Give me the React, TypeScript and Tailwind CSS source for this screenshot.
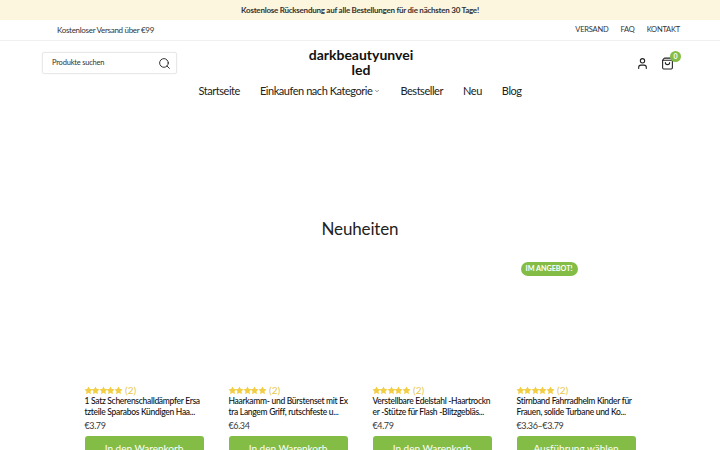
import { ChevronDown, Search, ShoppingBag, Star, User } from 'lucide-react';

const products = [
  { lines: ['1 Satz Scherenschalldämpfer Ersa', 'tzteile Sparabos Kündigen Haa...'], price: '€3.79', cta: 'In den Warenkorb' },
  { lines: ['Haarkamm- und Bürstenset mit Ex', 'tra Langem Griff, rutschfeste u...'], price: '€6.34', cta: 'In den Warenkorb' },
  { lines: ['Verstellbare Edelstahl -Haartrockn', 'er -Stütze für Flash -Blitzgebläs...'], price: '€4.79', cta: 'In den Warenkorb' },
  { lines: ['Stirnband Fahrradhelm Kinder für', 'Frauen, solide Turbane und Ko...'], price: '€3.36–€3.79', cta: 'Ausführung wählen', sale: true },
];

function ProductCard({ lines, price, cta, sale }: { lines: string[]; price: string; cta: string; sale?: boolean }) {
  return (
    <div className="relative w-[119px] shrink-0">
      {sale && (
        <span className="absolute left-[4px] top-0 h-[14px] rounded-full bg-[#84bd46] px-[5px] text-[7.2px] font-bold leading-[14px] text-white">
          IM ANGEBOT!
        </span>
      )}
      <div className="h-[122px]" />
      <div className="flex h-[12px] items-center">
        {[0, 1, 2, 3, 4].map((i) => (
          <Star key={i} className="-mx-[0.75px] h-[9px] w-[9px] shrink-0 fill-[#f2ce45] text-[#f2ce45]" strokeWidth={0} />
        ))}
        <span className="ml-[3px] text-[10px] leading-[12px] text-[#e6c84e]">(2)</span>
      </div>
      <div className="text-[8.5px] font-medium leading-[11px] tracking-[-0.3px] text-[#111]">
        {lines.map((line) => (
          <div key={line} className="whitespace-nowrap">{line}</div>
        ))}
      </div>
      <p className="mt-[2px] text-[9px] leading-[12px] tracking-[-0.4px] text-[#3a3a3a]">{price}</p>
      <button className="mt-[4px] h-[30px] w-full rounded-[3px] bg-[#84bd46] pb-[6px] text-[10px] leading-[14px] text-white">{cta}</button>
    </div>
  );
}

export default function App() {
  return (
    <div className="h-[450px] overflow-hidden bg-white font-['Lato',sans-serif] text-[#222]">
      <div className="flex h-[20px] items-center justify-center bg-[#fdf6df] text-[8px] font-bold tracking-[-0.25px] text-[#333]">
        Kostenlose Rücksendung auf alle Bestellungen für die nächsten 30 Tage!
      </div>

      <div className="flex h-[21px] items-center justify-between border-b border-[#f0f0f0] pl-[57px] pr-[40px] text-[#333]">
        <span className="text-[8px] tracking-[-0.3px]">Kostenloser Versand über €99</span>
        <div className="flex gap-[12px] text-[7.5px] tracking-[-0.2px]">
          <span>VERSAND</span>
          <span>FAQ</span>
          <span>KONTAKT</span>
        </div>
      </div>

      <div className="flex h-[37px] items-center justify-between pl-[42px] pr-[40px] pt-[7px]">
        <div className="flex h-[22px] w-[135px] items-center justify-between rounded-[2px] border border-[#e8e8e8] pl-[9px] pr-[5px] shadow-[0_0_2px_rgba(0,0,0,0.06)]">
          <span className="text-[7.5px] tracking-[-0.2px] text-[#333]">Produkte suchen</span>
          <Search className="h-[13px] w-[13px] text-[#222]" strokeWidth={1.7} />
        </div>
        <div className="-mt-[2px] w-[108px] break-all text-center text-[14px] font-bold leading-[15px] text-[#111]">darkbeautyunveiled</div>
        <div className="flex w-[135px] items-center justify-end gap-[12px] pr-[6px]">
          <User className="h-[13px] w-[13px] text-[#222]" strokeWidth={2} />
          <div className="relative">
            <ShoppingBag className="h-[13px] w-[13px] text-[#222]" strokeWidth={2} />
            <span className="absolute -right-[7px] -top-[6px] h-[11px] w-[11px] rounded-full bg-[#84bd46] text-center text-[7px] font-bold leading-[11px] text-white">0</span>
          </div>
        </div>
      </div>

      <nav className="mt-[1px] flex h-[24px] items-center justify-center gap-[20px] text-[11px] tracking-[-0.45px] text-[#222]">
        <span>Startseite</span>
        <span className="flex items-center gap-[2px]">Einkaufen nach Kategorie <ChevronDown className="h-[6px] w-[6px]" strokeWidth={2} /></span>
        <span>Bestseller</span>
        <span>Neu</span>
        <span>Blog</span>
      </nav>

      <h2 className="mt-[114px] text-center text-[17px] leading-[24px] tracking-[-0.15px] text-[#222]">Neuheiten</h2>

      <div className="mt-[21px] flex justify-center gap-[25px]">
        {products.map((p) => (
          <ProductCard key={p.lines[0]} {...p} />
        ))}
      </div>
    </div>
  );
}
